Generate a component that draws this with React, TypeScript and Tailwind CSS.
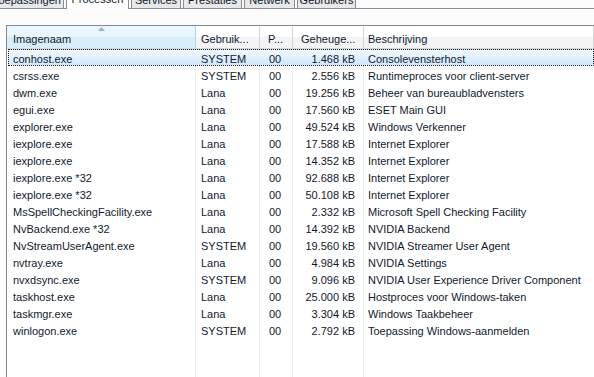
import React from "react";

type Row = { name: string; user: string; cpu: string; mem: string; desc: string };

const rows: Row[] = [
  { name: "conhost.exe", user: "SYSTEM", cpu: "00", mem: "1.468 kB", desc: "Consolevensterhost" },
  { name: "csrss.exe", user: "SYSTEM", cpu: "00", mem: "2.556 kB", desc: "Runtimeproces voor client-server" },
  { name: "dwm.exe", user: "Lana", cpu: "00", mem: "19.256 kB", desc: "Beheer van bureaubladvensters" },
  { name: "egui.exe", user: "Lana", cpu: "00", mem: "17.560 kB", desc: "ESET Main GUI" },
  { name: "explorer.exe", user: "Lana", cpu: "00", mem: "49.524 kB", desc: "Windows Verkenner" },
  { name: "iexplore.exe", user: "Lana", cpu: "00", mem: "17.588 kB", desc: "Internet Explorer" },
  { name: "iexplore.exe", user: "Lana", cpu: "00", mem: "14.352 kB", desc: "Internet Explorer" },
  { name: "iexplore.exe *32", user: "Lana", cpu: "00", mem: "92.688 kB", desc: "Internet Explorer" },
  { name: "iexplore.exe *32", user: "Lana", cpu: "00", mem: "50.108 kB", desc: "Internet Explorer" },
  { name: "MsSpellCheckingFacility.exe", user: "Lana", cpu: "00", mem: "2.332 kB", desc: "Microsoft Spell Checking Facility" },
  { name: "NvBackend.exe *32", user: "Lana", cpu: "00", mem: "14.392 kB", desc: "NVIDIA Backend" },
  { name: "NvStreamUserAgent.exe", user: "SYSTEM", cpu: "00", mem: "19.560 kB", desc: "NVIDIA Streamer User Agent" },
  { name: "nvtray.exe", user: "Lana", cpu: "00", mem: "4.984 kB", desc: "NVIDIA Settings" },
  { name: "nvxdsync.exe", user: "SYSTEM", cpu: "00", mem: "9.096 kB", desc: "NVIDIA User Experience Driver Component" },
  { name: "taskhost.exe", user: "Lana", cpu: "00", mem: "25.000 kB", desc: "Hostproces voor Windows-taken" },
  { name: "taskmgr.exe", user: "Lana", cpu: "00", mem: "3.304 kB", desc: "Windows Taakbeheer" },
  { name: "winlogon.exe", user: "SYSTEM", cpu: "00", mem: "2.792 kB", desc: "Toepassing Windows-aanmelden" },
];

function Tab({ label, w, selected, first }: { label: string; w: string; selected?: boolean; first?: boolean }) {
  if (selected) {
    return (
      <div className={`${w} h-[9px] flex items-end justify-center bg-white border-x border-[#898c95]`}>
        <span className="leading-[13px] mb-[3px] whitespace-nowrap">{label}</span>
      </div>
    );
  }
  return (
    <div
      className={`${w} h-[9px] flex items-end ${first ? "justify-start border-r" : "justify-center border-x"} bg-[#e8e8e8] border-b border-[#898c95]`}
    >
      <span className={`leading-[13px] mb-[1px] whitespace-nowrap ${first ? "-ml-[7px]" : ""}`}>{label}</span>
    </div>
  );
}

function Cells({ r, selected }: { r: Row; selected?: boolean }) {
  const b = selected ? "border-transparent" : "border-[#eaeff5]";
  return (
    <>
      <div className={`w-[188px] shrink-0 pl-[5px] pt-[4px] leading-[13px] whitespace-nowrap overflow-hidden border-r ${b}`}>{r.name}</div>
      <div className={`w-[64px] shrink-0 pl-[5px] pt-[4px] leading-[13px] whitespace-nowrap overflow-hidden border-r ${b}`}>{r.user}</div>
      <div className={`w-[33px] shrink-0 pl-[9px] pt-[4px] leading-[13px] whitespace-nowrap overflow-hidden border-r ${b}`}>{r.cpu}</div>
      <div className={`w-[71px] shrink-0 pr-[8px] pt-[4px] leading-[13px] text-right whitespace-nowrap overflow-hidden border-r ${b}`}>{r.mem}</div>
      <div className="flex-1 pl-[4px] pt-[4px] leading-[13px] whitespace-nowrap overflow-hidden">{r.desc}</div>
    </>
  );
}

export default function App() {
  const hdr = "bg-linear-to-b from-white from-50% to-[#f3f4f6] to-50% border-r border-[#d5d5d5] pt-[7px] leading-[13px] whitespace-nowrap overflow-hidden";
  return (
    <div
      className="w-[594px] h-[377px] overflow-hidden bg-[#fcfcfc] flex flex-col text-[11px] text-[#101a2e]"
      style={{ fontFamily: '"Liberation Sans", Arial, sans-serif' }}
    >
      {/* tab strip */}
      <div className="h-[9px] shrink-0 flex items-end overflow-hidden bg-[linear-gradient(to_top,#898c95_1px,transparent_1px)]">
        <Tab label="Toepassingen" w="w-[64px]" first />
        <div className="w-[2px] h-[9px]" />
        <Tab label="Processen" w="w-[63px]" selected />
        <div className="w-[2px] h-[9px]" />
        <Tab label="Services" w="w-[50px]" />
        <div className="w-[2px] h-[9px]" />
        <Tab label="Prestaties" w="w-[59px]" />
        <div className="w-[2px] h-[9px]" />
        <Tab label="Netwerk" w="w-[51px]" />
        <div className="w-[2px] h-[9px]" />
        <Tab label="Gebruikers" w="w-[59px]" />
      </div>

      {/* panel */}
      <div className="flex-1 flex flex-col pt-[16px] pl-[6px]">
        <div className="flex-1 flex flex-col bg-white border-t border-l border-[#828790]">
          {/* header */}
          <div className="h-[23px] shrink-0 flex border-b border-[#d5d5d5]">
            <div className="w-[189px] shrink-0 flex flex-col bg-linear-to-b from-[#eaf6fd] from-50% to-[#d9eefb] to-50% border-r border-[#a9d6f2] leading-[13px]">
              <svg width="7" height="4" viewBox="0 0 7 4" className="self-center mt-[1px] shrink-0">
                <polygon points="3.5,0 7,4 0,4" fill="#9cb3c9" />
              </svg>
              <span className="pl-[6px] pt-[2px] whitespace-nowrap">Imagenaam</span>
            </div>
            <div className={`w-[64px] shrink-0 pl-[5px] ${hdr}`}>Gebruik...</div>
            <div className={`w-[33px] shrink-0 pl-[8px] ${hdr}`}>P...</div>
            <div className={`w-[71px] shrink-0 pl-[8px] ${hdr}`}>Geheuge...</div>
            <div className={`flex-1 pl-[4px] ${hdr}`}>Beschrijving</div>
          </div>

          {/* body */}
          <div className="flex-1 flex flex-col">
            {rows.map((r, i) =>
              i === 0 ? (
                <div
                  key={i}
                  className="h-[17px] shrink-0 ml-[1px] flex border border-dotted border-[#1a1a1a] bg-linear-to-b from-[#f1f8fe] to-[#d2e8fc]"
                  style={{ marginTop: 0 }}
                >
                  <div className="flex -mt-[1px] -ml-[1px] w-full">
                    <Cells r={r} selected />
                  </div>
                </div>
              ) : (
                <div key={i} className="h-[17px] shrink-0 ml-[1px] flex">
                  <Cells r={r} />
                </div>
              )
            )}
            <div className="flex-1 ml-[1px] flex">
              <div className="w-[188px] shrink-0 border-r border-[#eaeff5]" />
              <div className="w-[64px] shrink-0 border-r border-[#eaeff5]" />
              <div className="w-[33px] shrink-0 border-r border-[#eaeff5]" />
              <div className="w-[71px] shrink-0 border-r border-[#eaeff5]" />
              <div className="flex-1" />
            </div>
          </div>
        </div>
      </div>
    </div>
  );
}
